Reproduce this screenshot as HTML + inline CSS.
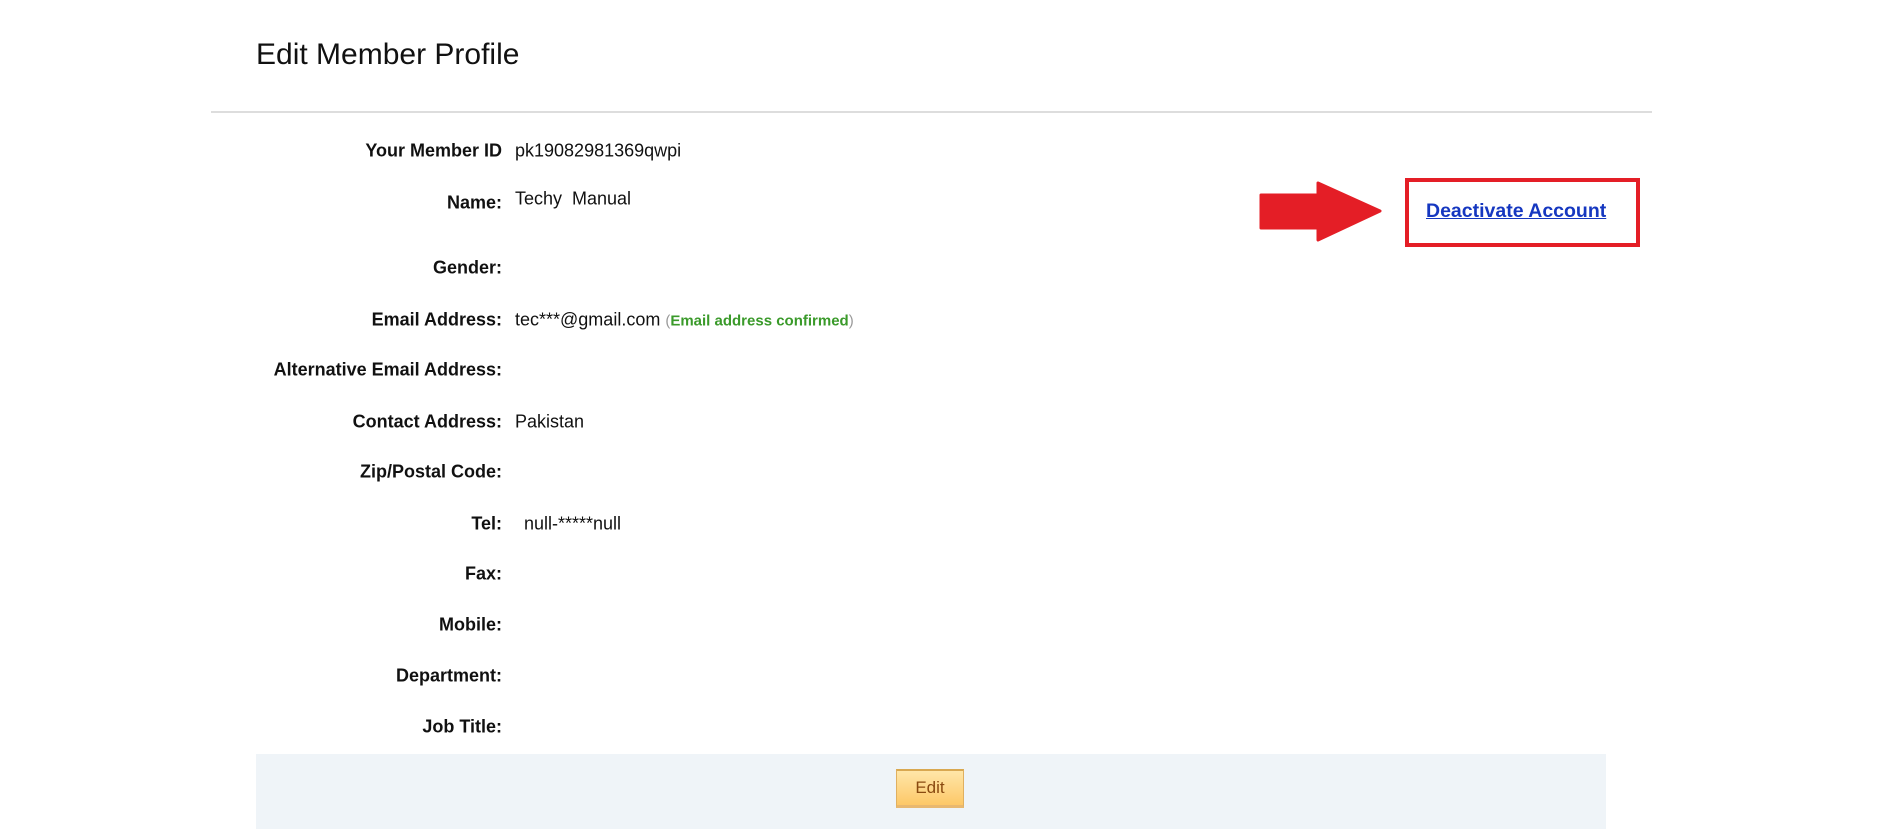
<!DOCTYPE html>
<html><head><meta charset="utf-8"><style>
body{margin:0;width:1878px;height:829px;background:#fff;font-family:"Liberation Sans",Arial,sans-serif;position:relative;overflow:hidden;color:#111}
.t{position:absolute;left:256px;top:38px;font-size:30px;color:#111}
.hr{position:absolute;left:211px;top:111px;width:1441px;height:2px;background:#ddd}
.l{position:absolute;right:1376px;font-weight:bold;font-size:18px;transform:translateY(-50%);white-space:nowrap}
.v{position:absolute;left:515px;font-size:18px;transform:translateY(-50%);white-space:nowrap}
.g{font-size:15px;color:#999}.g b{color:#3a9a2a}
.box{position:absolute;left:1405px;top:178px;width:227px;height:61px;border:4px solid #e41e26}
.lk{position:absolute;left:1426px;top:199px;font-weight:bold;font-size:19.5px;color:#1537c0;text-decoration:underline}
.panel{position:absolute;left:256px;top:754px;width:1350px;height:75px;background:#eff4f8}
.btn{position:absolute;left:896px;top:769px;width:68px;height:39px;box-sizing:border-box;border:1px solid #e0b060;border-top:2px solid #d9a850;border-bottom:3px solid #e8b870;background:linear-gradient(#ffe6a8,#fdc868);color:#8a4a10;font-size:17px;text-align:center;line-height:34px}
</style></head><body>
<div class="t">Edit Member Profile</div>
<div class="hr"></div>
<div class="l" style="top:151px">Your Member ID</div><div class="v" style="top:151px">pk19082981369qwpi</div>
<div class="l" style="top:203px">Name:</div><div class="v" style="top:199px">Techy&nbsp; Manual</div>
<div class="l" style="top:268px">Gender:</div>
<div class="l" style="top:320px">Email Address:</div><div class="v" style="top:320px">tec***@gmail.com <span class="g">(<b>Email address confirmed</b>)</span></div>
<div class="l" style="top:370px">Alternative Email Address:</div>
<div class="l" style="top:422px">Contact Address:</div><div class="v" style="top:422px">Pakistan</div>
<div class="l" style="top:472px">Zip/Postal Code:</div>
<div class="l" style="top:524px">Tel:</div><div class="v" style="top:524px;left:524px">null-*****null</div>
<div class="l" style="top:574px">Fax:</div>
<div class="l" style="top:625px">Mobile:</div>
<div class="l" style="top:676px">Department:</div>
<div class="l" style="top:727px">Job Title:</div>
<svg style="position:absolute;left:1258px;top:181px" width="126" height="62"><path d="M3 14 H60 V2 L122 30 L60 59 V47 H3 Z" fill="#e41e26" stroke="#e41e26" stroke-width="3" stroke-linejoin="round"/></svg>
<div class="box"></div>
<div class="lk" style="top:200px">Deactivate Account</div>
<div class="panel"></div>
<div class="btn">Edit</div>
</body></html>
